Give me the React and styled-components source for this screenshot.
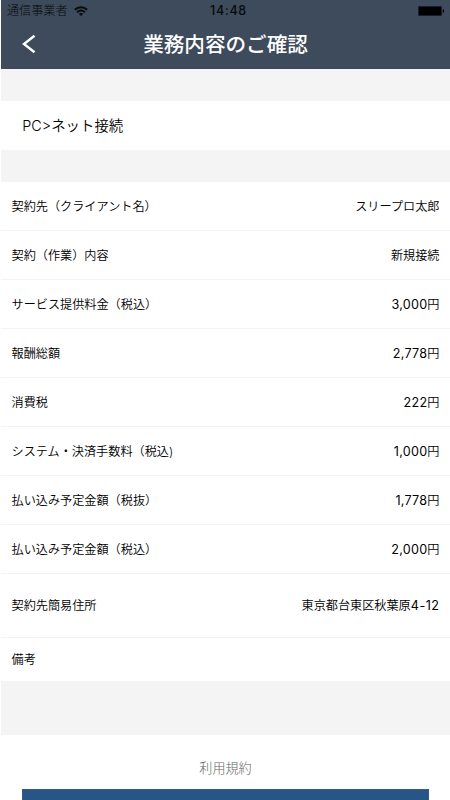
import React from "react";
import styled, { createGlobalStyle } from "styled-components";

const GlobalStyle = createGlobalStyle`
  * { box-sizing: border-box; }
  html, body { margin: 0; background: #fff; overflow: hidden; }
  body { font-family: Inter, "Noto Sans CJK JP", sans-serif; color: #000; }
`;

const Screen = styled.main`
  display: flex;
  flex-direction: column;
  width: 450px;
  height: 800px;
  padding-left: 1px;
  overflow: hidden;
  background: #fff;
`;

const Header = styled.header`
  flex: none;
  height: 69px;
  background: #3e4b5c;
`;

const StatusBar = styled.div`
  display: grid;
  grid-template-columns: 1fr auto 1fr;
  align-items: center;
  height: 20px;
  padding: 0 6px;
  color: #07090c;
`;

const Carrier = styled.div`
  display: flex;
  align-items: center;
  gap: 7px;
  padding-top: 1px;
  font-size: 12.1px;
  font-weight: 300;
  line-height: 20px;
`;

const Clock = styled.time`
  padding: 1px 0 0 6px;
  font-size: 12.5px;
  font-weight: 500;
  letter-spacing: 0.75px;
  line-height: 20px;
`;

const BatterySlot = styled.div`
  display: flex;
  justify-content: flex-end;
`;

const NavBar = styled.div`
  display: grid;
  grid-template-columns: 60px 1fr 60px;
  align-items: center;
  height: 49px;
`;

const BackButton = styled.button`
  display: flex;
  align-items: center;
  height: 49px;
  padding: 0 0 2px 20px;
  border: 0;
  background: none;
`;

const Title = styled.h1`
  margin: 0;
  color: #fff;
  font-size: 20.6px;
  font-weight: 500;
  line-height: 48px;
  text-align: center;
  white-space: nowrap;
`;

const Gap = styled.div`
  flex: none;
  height: ${(p) => p.$height}px;
  background: #f4f4f4;
`;

const Category = styled.section`
  flex: none;
  height: 49px;
  padding-left: 21.3px;
  font-size: 14.4px;
  font-weight: 350;
  line-height: 50px;
`;

const Details = styled.dl`
  flex: none;
  margin: 0;
`;

const Row = styled.div`
  display: flex;
  align-items: center;
  justify-content: space-between;
  height: ${(p) => p.$height || 49}px;
  padding: 1px 10.5px 0;
  border-bottom: ${(p) => (p.$last ? 0 : 1)}px solid #f4f4f4;
  font-size: 12.15px;
  font-weight: 350;
  white-space: nowrap;
`;

const Label = styled.dt`
  line-height: 20px;
`;

const Value = styled.dd`
  margin: 0;
  line-height: 20px;
`;

const Digits = styled.span`
  font-size: 12.6px;
  font-weight: 400;
  letter-spacing: ${(p) => (p.$wide ? 0.5 : 0.25)}px;
`;

const Footer = styled.footer`
  display: flex;
  flex-direction: column;
  padding: 0 21px;
`;

const TermsLink = styled.a`
  height: 54px;
  padding-top: 22px;
  color: #666;
  font-size: 13.1px;
  font-weight: 300;
  line-height: 22px;
  text-align: center;
`;

const SubmitButton = styled.button`
  height: 46px;
  border: 1px solid #315b88;
  background: #275588;
`;

const details = [
  { label: "契約先（クライアント名）", text: "スリープロ太郎" },
  { label: "契約（作業）内容", text: "新規接続" },
  { label: "サービス提供料金（税込）", digits: "3,000", unit: "円" },
  { label: "報酬総額", digits: "2,778", unit: "円" },
  { label: "消費税", digits: "222", unit: "円" },
  { label: "システム・決済手数料（税込)", digits: "1,000", unit: "円" },
  { label: "払い込み予定金額（税抜）", digits: "1,778", unit: "円" },
  { label: "払い込み予定金額（税込）", digits: "2,000", unit: "円" },
  { label: "契約先簡易住所", text: "東京都台東区秋葉原", digits: "4-12", height: 64 },
  { label: "備考", height: 43 },
];

const WifiIcon = () => (
  <svg width="14" height="10" viewBox="0 0 14 10" fill="none" stroke="#07090c" strokeWidth="1.9">
    <path d="M0.8 3.7C4.4 0.4 9.6 0.4 13.2 3.7" />
    <path d="M3.1 6.2C5.4 4.1 8.6 4.1 10.9 6.2" />
    <path d="M4.8 7.8C6.1 6.7 7.9 6.7 9.2 7.8L7 10Z" fill="#07090c" stroke="none" />
  </svg>
);

const BatteryIcon = () => (
  <svg width="26" height="10" viewBox="0 0 26 10">
    <rect width="24" height="10" rx="1" fill="#1a2029" />
    <rect x="1" y="1" width="22" height="8" fill="#000" />
    <rect x="24.7" y="3.3" width="1.3" height="3.4" rx="0.6" fill="#000" />
  </svg>
);

const BackIcon = () => (
  <svg width="15" height="20" viewBox="0 0 15 20" fill="none" stroke="#fff" strokeWidth="2.4">
    <path d="M13.5 1.7L3 10L13.5 18.3" />
  </svg>
);

export default function App() {
  return (
    <>
      <GlobalStyle />
      <Screen>
        <Header>
          <StatusBar>
            <Carrier>
              通信事業者
              <WifiIcon />
            </Carrier>
            <Clock>14:48</Clock>
            <BatterySlot>
              <BatteryIcon />
            </BatterySlot>
          </StatusBar>
          <NavBar>
            <BackButton aria-label="戻る">
              <BackIcon />
            </BackButton>
            <Title>業務内容のご確認</Title>
          </NavBar>
        </Header>
        <Gap $height={32} />
        <Category>PC&gt;ネット接続</Category>
        <Gap $height={32} />
        <Details>
          {details.map((item, i) => (
            <Row key={item.label} $height={item.height} $last={i === details.length - 1}>
              <Label>{item.label}</Label>
              <Value>
                {item.text}
                {item.digits && <Digits $wide={!item.unit}>{item.digits}</Digits>}
                {item.unit}
              </Value>
            </Row>
          ))}
        </Details>
        <Gap $height={54} />
        <Footer>
          <TermsLink>利用規約</TermsLink>
          <SubmitButton aria-label="確認" />
        </Footer>
      </Screen>
    </>
  );
}
